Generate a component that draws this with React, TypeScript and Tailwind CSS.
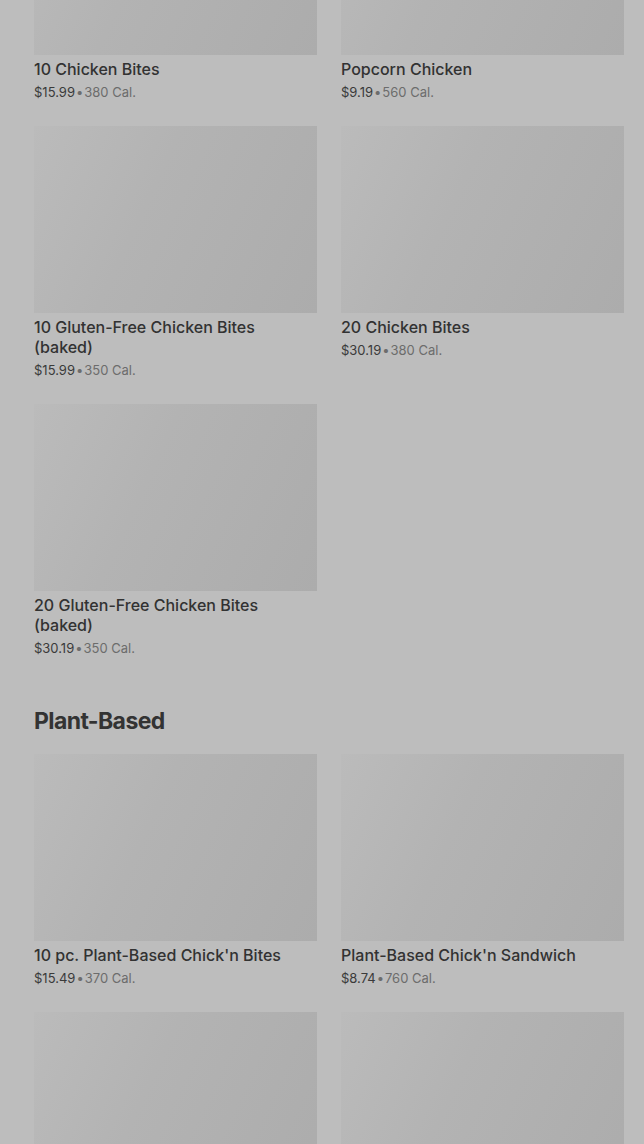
import React from "react";

type Item = { name: string; price: string; cal: string };

const chicken: Item[] = [
  { name: "10 Chicken Bites", price: "$15.99", cal: "380 Cal." },
  { name: "Popcorn Chicken", price: "$9.19", cal: "560 Cal." },
  { name: "10 Gluten-Free Chicken Bites (baked)", price: "$15.99", cal: "350 Cal." },
  { name: "20 Chicken Bites", price: "$30.19", cal: "380 Cal." },
  { name: "20 Gluten-Free Chicken Bites (baked)", price: "$30.19", cal: "350 Cal." },
];

const plant: Item[] = [
  { name: "10 pc. Plant-Based Chick'n Bites", price: "$15.49", cal: "370 Cal." },
  { name: "Plant-Based Chick'n Sandwich", price: "$8.74", cal: "760 Cal." },
  { name: "", price: "", cal: "" },
  { name: "", price: "", cal: "" },
];

function Card({ item }: { item: Item }) {
  return (
    <div className="flex flex-col">
      <div className="h-[187px] w-full bg-[linear-gradient(115deg,#bbbbbb_0%,#b3b3b3_40%,#acacac_100%)]" />
      {item.name && (
        <>
          <div className="mt-1 text-[16px] leading-[20px] font-medium text-[#323232] pr-6">{item.name}</div>
          <div className="mt-[4px] text-[13px] leading-[19px] text-[#6c6c6c]">
            <span className="text-[#3a3a3a]">{item.price}</span>
            <span className="mx-[1px]">•</span>
            <span>{item.cal}</span>
          </div>
        </>
      )}
    </div>
  );
}

export default function App() {
  return (
    <div
      className="w-[644px] h-[1144px] overflow-hidden bg-[#bdbdbd] pl-[34px] pr-[20px]"
      style={{ fontFamily: "Inter, 'Noto Sans', sans-serif" }}
    >
      <div className="-mt-[132px] grid grid-cols-2 gap-x-6 gap-y-6">
        {chicken.map((it, i) => (
          <Card key={i} item={it} />
        ))}
      </div>
      <h2 className="mt-[47px] mb-[17px] text-[23px] leading-[32px] font-bold tracking-[-0.6px] text-[#333333]">
        Plant-Based
      </h2>
      <div className="grid grid-cols-2 gap-x-6 gap-y-6">
        {plant.map((it, i) => (
          <Card key={i} item={it} />
        ))}
      </div>
    </div>
  );
}
